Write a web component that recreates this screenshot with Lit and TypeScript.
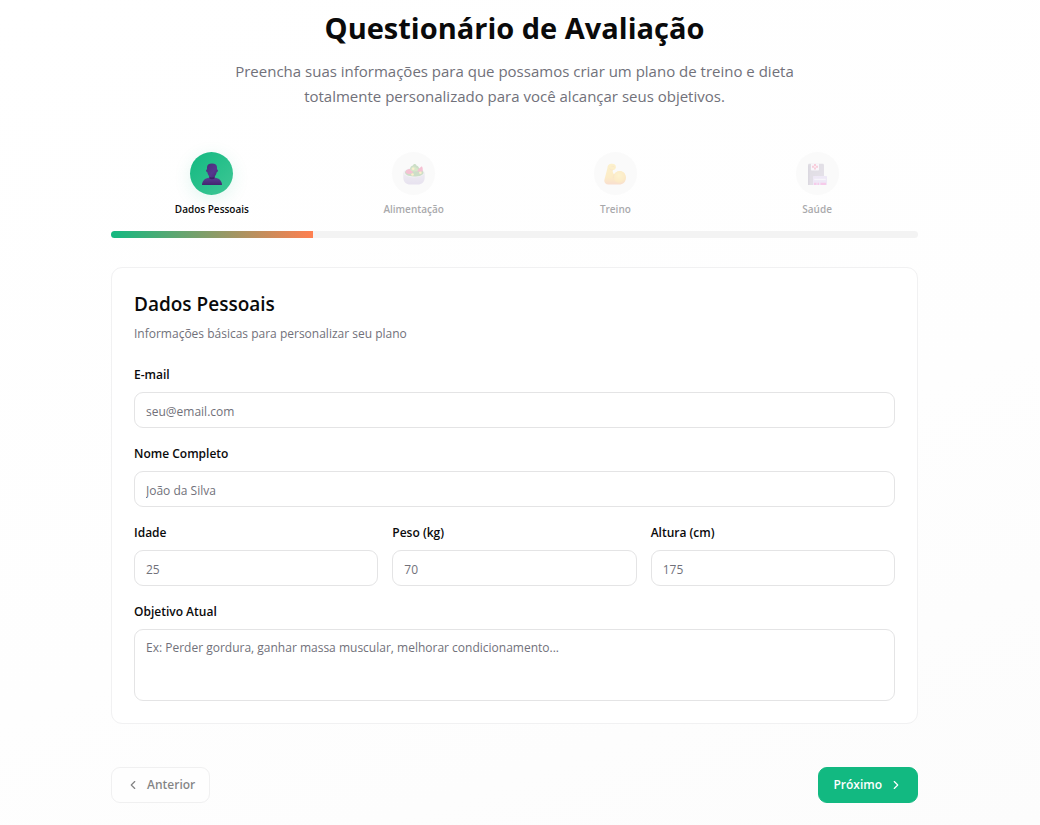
import { LitElement, html, svg, css } from "lit";
import { customElement, state } from "lit/decorators.js";
import { classMap } from "lit/directives/class-map.js";

const personIcon = svg`
  <defs>
    <linearGradient id="p-body" x1="0" y1="0" x2="0" y2="1">
      <stop offset="0" stop-color="#5a3d94" /><stop offset="1" stop-color="#43256f" />
    </linearGradient>
    <linearGradient id="p-head" x1="0" y1="0" x2="1" y2="1">
      <stop offset="0" stop-color="#4b2b78" /><stop offset="0.6" stop-color="#55378e" /><stop offset="1" stop-color="#452672" />
    </linearGradient>
  </defs>
  <path fill="url(#p-body)" d="M1 22c0-4.300 3-7 7-7.300h6c4 .3 7 3 7 7.300z" />
  <path fill="#3d2166" d="M8.300 13h5.400v2.300c-1.200 1.400-4.200 1.400-5.400 0z" />
  <path fill="url(#p-head)" d="M6 4.200C6 1.800 7.600.4 11 .4s5 1.400 5 3.800v2.300c.8 0 1 .6.900 1.300-.1.900-.5 1.400-1.200 1.400-.5 3-2.300 5.300-4.700 5.300s-4.200-2.300-4.700-5.300c-.7 0-1.100-.5-1.200-1.400-.1-.7.100-1.300.9-1.300z" />`;

const saladIcon = svg`
  <defs>
    <linearGradient id="s-bowl" x1="0" y1="0" x2="0" y2="1">
      <stop offset="0" stop-color="#c9bfd8" /><stop offset="1" stop-color="#ab98cc" />
    </linearGradient>
  </defs>
  <path fill="url(#s-bowl)" d="M.3 10h21.400v4.500c0 4.600-3 7-7 7H7.300c-4 0-7-2.400-7-7z" />
  <ellipse cx="11" cy="9.800" rx="10.700" ry="4.700" fill="#d9d2e3" />
  <path fill="#43882f" d="M2 9c1-2 3-2.500 5-3 .3-2 1.300-3.200 2.800-3.500C10.500.4 12.500.4 13.500 2.400c1.700.4 2.500 1.700 2.700 3.400 2 .2 3.700 1.500 4.300 3.600.1 2.500-4 4-9.500 4s-9.300-1.600-9-4.400z" />
  <path fill="#e3185e" d="M2.400 9.300C2.600 7 5 6 7.300 6l3 3.300-3 1.700c-2 .3-4-.3-4.900-1.700zM12.500 8.300l6.300-5.100c1.200 1.600 1.300 3.800.4 5.500z" />
  <path fill="#6fae3c" d="M8 5.300c.8-1.800 3.800-2.500 5.400-.6 1.800.4 2.200 2.200 1.100 3.300l-3 .5-3-.5C7.500 7.300 7.400 6.200 8 5.300z" />
  <circle cx="10.200" cy="5.800" r="1.300" fill="#ffd04a" />
  <circle cx="9.500" cy="11.500" r="1.300" fill="#ffc83d" />
  <circle cx="17.400" cy="9.700" r="1.300" fill="#ffc83d" />`;

const armIcon = svg`
  <defs>
    <linearGradient id="a-arm" x1="0" y1="0" x2="0" y2="1">
      <stop offset="0" stop-color="#ffd23f" /><stop offset="0.65" stop-color="#ffc02e" /><stop offset="1" stop-color="#f28a4b" />
    </linearGradient>
    <radialGradient id="a-muscle" cx="0.45" cy="0.35" r="0.7">
      <stop offset="0" stop-color="#ffd94f" /><stop offset="0.7" stop-color="#ffbc2e" /><stop offset="1" stop-color="#f0983d" />
    </radialGradient>
  </defs>
  <path fill="url(#a-arm)" d="M3.400 5.200C3.400 2.500 5 .8 7.400.8c2.700-.2 4.500.9 4.500 3.100 0 2-1.300 3.100-3.400 3.200.1 1.700.6 3.200 1.500 4.400 1.300-2.200 3.200-3.400 5.600-3.400 3.700 0 6.300 2.700 6.300 6.600 0 4.200-2.700 6.800-7 6.800H4.500C1.700 21.500.2 20 .3 17.300z" />
  <circle cx="15.500" cy="14.300" r="6.100" fill="url(#a-muscle)" />
  <path fill="none" stroke="#eda23a" stroke-width="0.800" stroke-linecap="round" d="M8.500 7.100c-1.300.1-2.300-.5-2.700-1.400M8 3.300c1-.3 2 0 2.300.7M10 11.500c-.6 1.200-.8 2.200-.7 3.500" />`;

const healthIcon = svg`
  <defs>
    <linearGradient id="h-tower" x1="0" y1="0" x2="1" y2="1">
      <stop offset="0" stop-color="#8d819d" /><stop offset="1" stop-color="#a99bb9" />
    </linearGradient>
  </defs>
  <path fill="url(#h-tower)" d="M2 2.200C2 1.400 2.600.8 3.400.8h13.200c.8 0 1.400.6 1.400 1.400V22H2z" />
  <path fill="#7d7190" d="M2 2.500h1.500V22H2z" />
  <path fill="#f3eafb" d="M5 .4h8v6c0 .6-.4 1-1 1H6c-.6 0-1-.4-1-1z" />
  <path fill="#f0477f" d="M8 1h2v1.800h2v2h-2v1.800H8V4.800H6v-2h2z" />
  <path fill="#fff" d="M8.300 3.100h1.400v1.400H8.300z" />
  <path fill="#cbb2ea" d="M7 14c0-.6.4-1 1-1h12c.6 0 1 .4 1 1v8H7z" />
  <path fill="#efe6fb" d="M8.300 15.800h11.400v1.300H8.300z" />
  <path fill="#ea3fb8" d="M8 19.800h2.500V22H8zM11.500 19.800H13V22h-1.500zM14.500 19.800H20V22h-5.500z" />`;

const steps = [
  { label: "Dados Pessoais", icon: personIcon },
  { label: "Alimentação", icon: saladIcon },
  { label: "Treino", icon: armIcon },
  { label: "Saúde", icon: healthIcon },
];

@customElement("app-root")
export class AppRoot extends LitElement {
  @state() private current = 0;

  static styles = css`
    :host {
      display: block;
      min-height: 100vh;
      box-sizing: border-box;
      padding: 10px 25px 22px 14px;
      background: linear-gradient(160deg, #ffffff 0%, #fefefe 60%, #fcfcfc 100%);
      color: #0a0a0b;
      font-family: "Open Sans", "Noto Sans", sans-serif;
      font-size: 12px;
      line-height: 20px;
    }
    * {
      box-sizing: border-box;
    }
    .container {
      max-width: 807px;
      margin: 0 auto;
    }
    .intro {
      display: flex;
      flex-direction: column;
      align-items: center;
      gap: 13px;
      margin-bottom: 43px;
      text-align: center;
    }
    .title {
      margin: 0;
      font-size: 29px;
      line-height: 36px;
      font-weight: 700;
    }
    .lead {
      max-width: 600px;
      margin: 0;
      font-size: 15px;
      line-height: 25px;
      color: #71717a;
    }
    .steps {
      display: grid;
      grid-template-columns: repeat(4, 1fr);
      margin: 0 0 14px;
      padding: 0;
      list-style: none;
    }
    .step {
      display: flex;
      flex-direction: column;
      align-items: center;
      gap: 6px;
      font-size: 10px;
      line-height: 16px;
      font-weight: 600;
      color: #55555a;
    }
    .step.upcoming {
      opacity: 0.5;
    }
    .step.upcoming .glyph {
      opacity: 0.5;
    }
    .step.active {
      color: #0a0a0b;
    }
    .bubble {
      display: grid;
      place-items: center;
      width: 43px;
      height: 43px;
      border-radius: 50%;
      background: #f7f7f7;
    }
    .step.active .bubble {
      background: linear-gradient(135deg, #12b981, #3fc795);
      box-shadow: 0 4px 18px rgba(16, 185, 129, 0.12);
    }
    .glyph {
      display: block;
      width: 22px;
      height: 22px;
    }
    .track {
      height: 7px;
      margin-bottom: 29px;
      border-radius: 4px;
      background: #f3f3f3;
      overflow: hidden;
    }
    .fill {
      height: 100%;
      background: linear-gradient(90deg, #12b981, #ff7f50);
    }
    .card {
      margin-bottom: 43px;
      padding: 22px;
      border: 1px solid #f1f1f2;
      border-radius: 11px;
      background: #fff;
    }
    .card-title {
      margin: 0 0 6px;
      font-size: 19px;
      line-height: 28px;
      font-weight: 600;
    }
    .card-text {
      margin: 0 0 21px;
      color: #71717a;
    }
    .fields {
      display: flex;
      flex-direction: column;
      gap: 16px;
    }
    .row {
      display: grid;
      grid-template-columns: repeat(3, 1fr);
      gap: 14px;
    }
    .field {
      display: flex;
      flex-direction: column;
      gap: 7px;
      min-width: 0;
    }
    .label {
      font-weight: 600;
    }
    .control {
      display: block;
      width: 100%;
      height: 36px;
      margin: 0;
      padding: 8px 11px 6px;
      border: 1px solid #e4e4e5;
      border-radius: 9px;
      background: #fff;
      color: inherit;
      font: inherit;
      outline: none;
      appearance: textfield;
    }
    .control.area {
      height: 72px;
      resize: none;
    }
    .control::placeholder {
      color: #71717a;
      opacity: 1;
    }
    .control:focus {
      border-color: #12b981;
    }
    .actions {
      display: flex;
      justify-content: space-between;
    }
    .btn {
      display: flex;
      align-items: center;
      gap: 7px;
      height: 36px;
      margin: 0;
      padding: 0 14px;
      border: 1px solid #12b981;
      border-radius: 9px;
      background: #12b981;
      color: #fff;
      font: inherit;
      font-weight: 600;
    }
    .btn.outline {
      border-color: #e4e4e5;
      background: #fff;
      color: #0a0a0b;
    }
    .btn:disabled {
      opacity: 0.5;
    }
    .chevron {
      width: 14px;
      height: 14px;
      fill: none;
      stroke: currentColor;
      stroke-width: 2;
      stroke-linecap: round;
      stroke-linejoin: round;
    }
  `;

  private go(delta: number) {
    this.current = Math.min(steps.length - 1, Math.max(0, this.current + delta));
  }

  private input(id: string, label: string, placeholder: string, type = "text") {
    return html`<div class="field">
      <label class="label" for=${id}>${label}</label>
      <input class="control" id=${id} type=${type} placeholder=${placeholder} />
    </div>`;
  }

  render() {
    return html`<main class="container">
      <header class="intro">
        <h1 class="title">Questionário de Avaliação</h1>
        <p class="lead">
          Preencha suas informações para que possamos criar um plano de treino e dieta totalmente
          personalizado para você alcançar seus objetivos.
        </p>
      </header>
      <ol class="steps">
        ${steps.map(
          (s, i) => html`<li
            class=${classMap({ step: true, active: i === this.current, upcoming: i > this.current })}
          >
            <span class="bubble"><svg class="glyph" viewBox="0 0 22 22" aria-hidden="true">${s.icon}</svg></span>
            <span>${s.label}</span>
          </li>`
        )}
      </ol>
      <div class="track">
        <div class="fill" style="width: ${((this.current + 1) / steps.length) * 100}%"></div>
      </div>
      <section class="card">
        <h2 class="card-title">Dados Pessoais</h2>
        <p class="card-text">Informações básicas para personalizar seu plano</p>
        <div class="fields">
          ${this.input("email", "E-mail", "seu@email.com", "email")}
          ${this.input("nome", "Nome Completo", "João da Silva")}
          <div class="row">
            ${this.input("idade", "Idade", "25", "number")}
            ${this.input("peso", "Peso (kg)", "70", "number")}
            ${this.input("altura", "Altura (cm)", "175", "number")}
          </div>
          <div class="field">
            <label class="label" for="objetivo">Objetivo Atual</label>
            <textarea
              class="control area"
              id="objetivo"
              placeholder="Ex: Perder gordura, ganhar massa muscular, melhorar condicionamento..."
            ></textarea>
          </div>
        </div>
      </section>
      <nav class="actions">
        <button class="btn outline" type="button" ?disabled=${this.current === 0} @click=${() => this.go(-1)}>
          <svg class="chevron" viewBox="0 0 24 24" aria-hidden="true"><path d="m15 18-6-6 6-6" /></svg>
          Anterior
        </button>
        <button class="btn" type="button" @click=${() => this.go(1)}>
          Próximo
          <svg class="chevron" viewBox="0 0 24 24" aria-hidden="true"><path d="m9 18 6-6-6-6" /></svg>
        </button>
      </nav>
    </main>`;
  }
}
